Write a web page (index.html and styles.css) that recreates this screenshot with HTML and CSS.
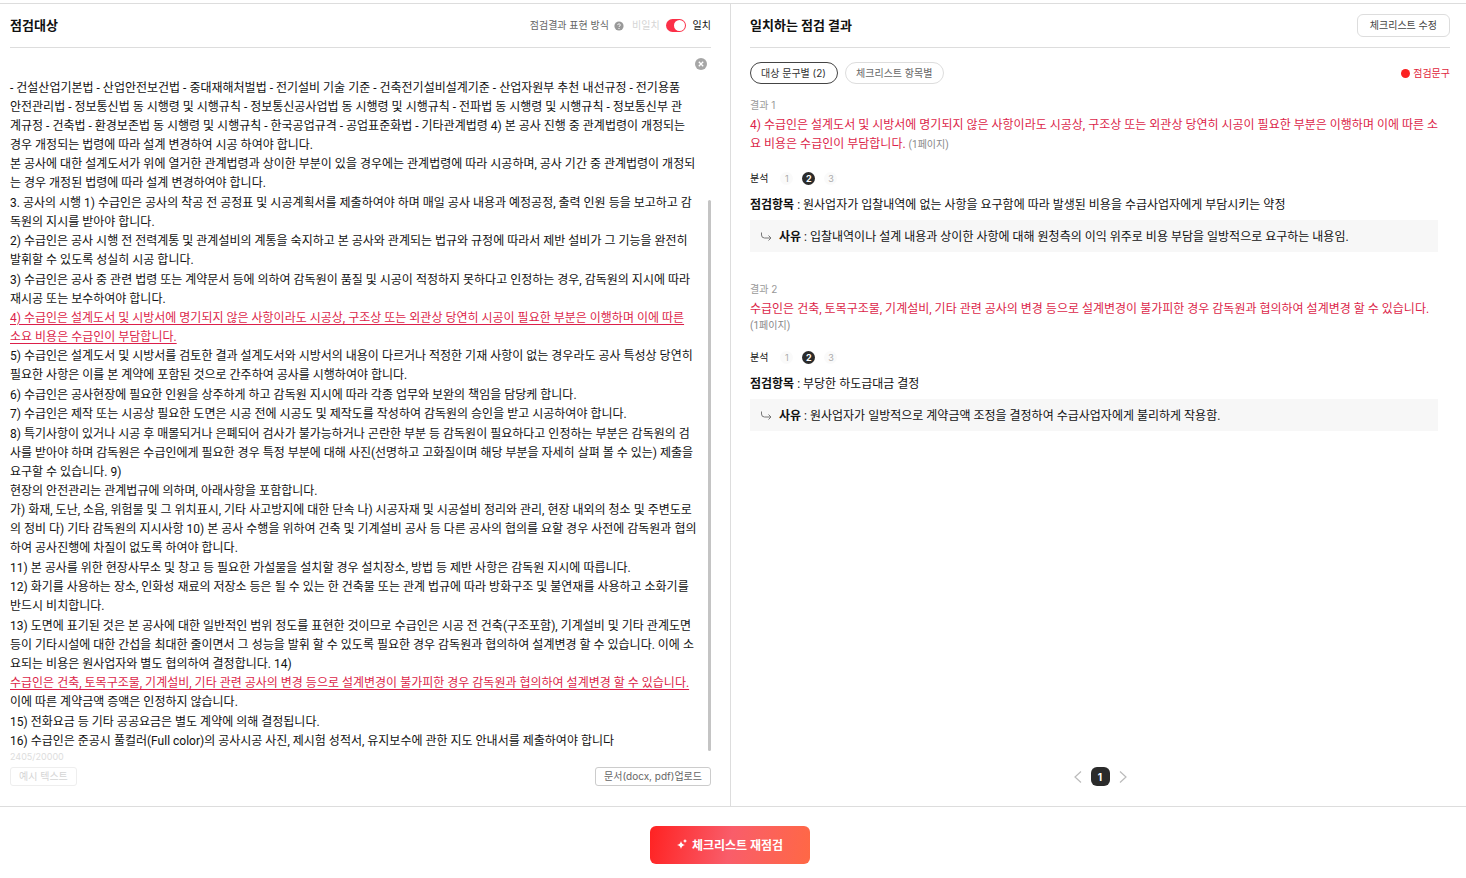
FILE: index.html
```html
<!DOCTYPE html>
<html lang="ko">

<head>
  <meta charset="UTF-8">
  <meta name="viewport" content="width=device-width, initial-scale=1.0">
  <title>체크리스트 점검</title>
  <link rel="stylesheet" href="styles.css">
</head>

<body>
  <main class="panels">
    <section class="panel target">
      <header class="panel-header">
        <h1>점검대상</h1>
        <div class="view-mode">
          <span class="view-label">점검결과 표현 방식</span>
          <button class="icon-btn" type="button" aria-label="도움말">
            <svg width="10" height="10" viewBox="0 0 10 10">
              <circle cx="5" cy="5" r="4.6" fill="#999" />
              <path d="M3.7 4.1c0-1.7 2.7-1.6 2.6 0 0 .9-1.3.9-1.3 1.8M5 7v1" fill="none" stroke="#fff" />
            </svg>
          </button>
          <span class="mode-off">비일치</span>
          <input class="toggle" type="checkbox" id="match-toggle" checked>
          <label for="match-toggle">일치</label>
        </div>
      </header>

      <div class="clear-row">
        <button class="icon-btn" type="button" aria-label="지우기">
          <svg width="12" height="12" viewBox="0 0 12 12">
            <circle cx="6" cy="6" r="6" fill="#a6a6a6" />
            <path d="M3.8 3.8l4.4 4.4M8.2 3.8L3.8 8.2" stroke="#fff" stroke-width="1.3" />
          </svg>
        </button>
      </div>

      <div class="document">
        <div class="document-text">
          <p>- 건설산업기본법 - 산업안전보건법 - 중대재해처벌법 - 전기설비 기술 기준 - 건축전기설비설계기준 - 산업자원부 추천 내선규정 - 전기용품<br>안전관리법 - 정보통신법 동 시행령 및 시행규칙 - 정보통신공사업법 동 시행령 및 시행규칙 - 전파법 동 시행령 및 시행규칙 - 정보통신부 관<br>계규정 - 건축법 - 환경보존법 동 시행령 및 시행규칙 - 한국공업규격 - 공업표준화법 - 기타관계법령 4) 본 공사 진행 중 관계법령이 개정되는<br>경우 개정되는 법령에 따라 설계 변경하여 시공 하여야 합니다.</p>
          <p>본 공사에 대한 설계도서가 위에 열거한 관계법령과 상이한 부분이 있을 경우에는 관계법령에 따라 시공하며, 공사 기간 중 관계법령이 개정되<br>는 경우 개정된 법령에 따라 설계 변경하여야 합니다.</p>
          <p>3. 공사의 시행 1) 수급인은 공사의 착공 전 공정표 및 시공계획서를 제출하여야 하며 매일 공사 내용과 예정공정, 출력 인원 등을 보고하고 감<br>독원의 지시를 받아야 합니다.</p>
          <p>2) 수급인은 공사 시행 전 전력계통 및 관계설비의 계통을 숙지하고 본 공사와 관계되는 법규와 규정에 따라서 제반 설비가 그 기능을 완전히<br>발휘할 수 있도록 성실히 시공 합니다.</p>
          <p>3) 수급인은 공사 중 관련 법령 또는 계약문서 등에 의하여 감독원이 품질 및 시공이 적정하지 못하다고 인정하는 경우, 감독원의 지시에 따라<br>재시공 또는 보수하여야 합니다.</p>
          <p><mark>4) 수급인은 설계도서 및 시방서에 명기되지 않은 사항이라도 시공상, 구조상 또는 외관상 당연히 시공이 필요한 부분은 이행하며 이에 따른<br>소요 비용은 수급인이 부담합니다.</mark></p>
          <p>5) 수급인은 설계도서 및 시방서를 검토한 결과 설계도서와 시방서의 내용이 다르거나 적정한 기재 사항이 없는 경우라도 공사 특성상 당연히<br>필요한 사항은 이를 본 계약에 포함된 것으로 간주하여 공사를 시행하여야 합니다.</p>
          <p>6) 수급인은 공사현장에 필요한 인원을 상주하게 하고 감독원 지시에 따라 각종 업무와 보완의 책임을 담당케 합니다.</p>
          <p>7) 수급인은 제작 또는 시공상 필요한 도면은 시공 전에 시공도 및 제작도를 작성하여 감독원의 승인을 받고 시공하여야 합니다.</p>
          <p>8) 특기사항이 있거나 시공 후 매몰되거나 은폐되어 검사가 불가능하거나 곤란한 부분 등 감독원이 필요하다고 인정하는 부분은 감독원의 검<br>사를 받아야 하며 감독원은 수급인에게 필요한 경우 특정 부분에 대해 사진(선명하고 고화질이며 해당 부분을 자세히 살펴 볼 수 있는) 제출을<br>요구할 수 있습니다. 9)</p>
          <p>현장의 안전관리는 관계법규에 의하며, 아래사항을 포함합니다.</p>
          <p>가) 화재, 도난, 소음, 위험물 및 그 위치표시, 기타 사고방지에 대한 단속 나) 시공자재 및 시공설비 정리와 관리, 현장 내외의 청소 및 주변도로<br>의 정비 다) 기타 감독원의 지시사항 10) 본 공사 수행을 위하여 건축 및 기계설비 공사 등 다른 공사의 협의를 요할 경우 사전에 감독원과 협의<br>하여 공사진행에 차질이 없도록 하여야 합니다.</p>
          <p>11) 본 공사를 위한 현장사무소 및 창고 등 필요한 가설물을 설치할 경우 설치장소, 방법 등 제반 사항은 감독원 지시에 따릅니다.</p>
          <p>12) 화기를 사용하는 장소, 인화성 재료의 저장소 등은 될 수 있는 한 건축물 또는 관계 법규에 따라 방화구조 및 불연재를 사용하고 소화기를<br>반드시 비치합니다.</p>
          <p>13) 도면에 표기된 것은 본 공사에 대한 일반적인 범위 정도를 표현한 것이므로 수급인은 시공 전 건축(구조포함), 기계설비 및 기타 관계도면<br>등이 기타시설에 대한 간섭을 최대한 줄이면서 그 성능을 발휘 할 수 있도록 필요한 경우 감독원과 협의하여 설계변경 할 수 있습니다. 이에 소<br>요되는 비용은 원사업자와 별도 협의하여 결정합니다. 14)</p>
          <p><mark>수급인은 건축, 토목구조물, 기계설비, 기타 관련 공사의 변경 등으로 설계변경이 불가피한 경우 감독원과 협의하여 설계변경 할 수 있습니다.</mark><br>이에 따른 계약금액 증액은 인정하지 않습니다.</p>
          <p>15) 전화요금 등 기타 공공요금은 별도 계약에 의해 결정됩니다.</p>
          <p>16) 수급인은 준공시 풀컬러(Full color)의 공사시공 사진, 제시험 성적서, 유지보수에 관한 지도 안내서를 제출하여야 합니다</p>
        </div>
        <div class="scroll-track">
          <div class="scroll-thumb"></div>
        </div>
      </div>

      <div class="char-count">2405/20000</div>
      <div class="target-actions">
        <button class="small-btn" type="button" disabled>예시 텍스트</button>
        <button class="small-btn" type="button">문서(docx, pdf)업로드</button>
      </div>
    </section>

    <section class="panel results">
      <header class="panel-header">
        <h2>일치하는 점검 결과</h2>
        <button class="edit-btn" type="button">체크리스트 수정</button>
      </header>

      <div class="filter-row">
        <div class="tabs">
          <button class="tab active" type="button">대상 문구별 (2)</button>
          <button class="tab" type="button">체크리스트 항목별</button>
        </div>
        <span class="legend">점검문구</span>
      </div>

      <div class="result-list">
        <article class="result">
          <h3>결과 1</h3>
          <p class="phrase">4) 수급인은 설계도서 및 시방서에 명기되지 않은 사항이라도 시공상, 구조상 또는 외관상 당연히 시공이 필요한 부분은 이행하며 이에 따른 소<br>요 비용은 수급인이 부담합니다. <span class="page-ref">(1페이지)</span></p>
          <div class="analysis">
            <span>분석</span>
            <button class="step" type="button">1</button>
            <button class="step active" type="button">2</button>
            <button class="step" type="button">3</button>
          </div>
          <p class="item"><strong>점검항목</strong> : 원사업자가 입찰내역에 없는 사항을 요구함에 따라 발생된 비용을 수급사업자에게 부담시키는 약정</p>
          <div class="reason">
            <svg width="12" height="12" viewBox="0 0 12 12" fill="none" stroke="#777">
              <path d="M1.5 1.5V4q0 3 3 3H11M8.5 4.500L11 7 8.500 9.500" />
            </svg>
            <p><strong>사유</strong> : 입찰내역이나 설계 내용과 상이한 사항에 대해 원청측의 이익 위주로 비용 부담을 일방적으로 요구하는 내용임.</p>
          </div>
        </article>

        <article class="result">
          <h3>결과 2</h3>
          <p class="phrase">수급인은 건축, 토목구조물, 기계설비, 기타 관련 공사의 변경 등으로 설계변경이 불가피한 경우 감독원과 협의하여 설계변경 할 수 있습니다. <span class="page-ref block">(1페이지)</span></p>
          <div class="analysis">
            <span>분석</span>
            <button class="step" type="button">1</button>
            <button class="step active" type="button">2</button>
            <button class="step" type="button">3</button>
          </div>
          <p class="item"><strong>점검항목</strong> : 부당한 하도급대금 결정</p>
          <div class="reason">
            <svg width="12" height="12" viewBox="0 0 12 12" fill="none" stroke="#777">
              <path d="M1.5 1.5V4q0 3 3 3H11M8.5 4.500L11 7 8.500 9.500" />
            </svg>
            <p><strong>사유</strong> : 원사업자가 일방적으로 계약금액 조정을 결정하여 수급사업자에게 불리하게 작용함.</p>
          </div>
        </article>
      </div>

      <nav class="pagination">
        <button class="icon-btn" type="button" aria-label="이전">
          <svg width="8" height="12" viewBox="0 0 8 12" fill="none" stroke="#bbb" stroke-width="1.2">
            <path d="M7 .5L1 6l6 5.5" />
          </svg>
        </button>
        <button class="page-btn" type="button">1</button>
        <button class="icon-btn" type="button" aria-label="다음">
          <svg width="8" height="12" viewBox="0 0 8 12" fill="none" stroke="#bbb" stroke-width="1.2">
            <path d="M1 .5L7 6l-6 5.5" />
          </svg>
        </button>
      </nav>
    </section>
  </main>

  <footer class="footer">
    <button class="recheck-btn" type="button">
      <svg width="10" height="10" viewBox="0 0 10 10" fill="#fff">
        <path d="M4 2Q4.600 5.400 8 6 4.600 6.600 4 10 3.400 6.600 0 6 3.400 5.400 4 2z" />
        <path d="M8 0q.3 1.700 2 2Q8.300 2.300 8 4 7.700 2.300 6 2 7.700 1.700 8 0z" />
      </svg>
      체크리스트 재점검
    </button>
  </footer>
</body>

</html>
```
FILE: styles.css
```css
* {
  box-sizing: border-box;
}

body {
  margin: 0;
  padding-top: 3px;
  min-height: 100vh;
  display: flex;
  flex-direction: column;
  background: #fff;
  color: #111;
  font-family: Inter, "Noto Sans CJK KR", sans-serif;
  font-size: 12px;
  line-height: 19px;
}

h1,
h2,
h3,
p {
  margin: 0;
}

button {
  font-family: inherit;
  cursor: pointer;
}

svg {
  display: block;
}

.panels {
  flex: 1;
  display: grid;
  grid-template-columns: 731fr 735fr;
  border-top: 1px solid #ddd;
  border-bottom: 1px solid #ddd;
}

.panel {
  display: flex;
  flex-direction: column;
  min-width: 0;
  padding-bottom: 20px;
}

.target {
  padding-left: 10px;
  padding-right: 19px;
  border-right: 1px solid #ddd;
}

.results {
  padding-left: 19px;
  padding-right: 16px;
}

.panel-header {
  display: flex;
  align-items: center;
  justify-content: space-between;
  height: 44px;
  border-bottom: 1px solid #ddd;
}

.panel-header h1,
.panel-header h2 {
  font-size: 13px;
  font-weight: 700;
}

.view-mode {
  display: flex;
  align-items: center;
  font-size: 10px;
}

.view-label {
  color: #666;
  margin-right: 5px;
}

.mode-off {
  color: #d5d5d5;
  margin-left: 8px;
}

.toggle {
  appearance: none;
  width: 20px;
  height: 13px;
  margin: 0 7px 0 6px;
  padding: 1px;
  border-radius: 7px;
  background: #ccc;
  display: flex;
  cursor: pointer;
}

.toggle::before {
  content: "";
  width: 11px;
  height: 11px;
  border-radius: 50%;
  background: #fff;
}

.toggle:checked {
  background: #fb3048;
  justify-content: flex-end;
}

.icon-btn {
  padding: 0;
  border: none;
  background: none;
}

.clear-row {
  display: flex;
  justify-content: flex-end;
  padding: 10px 4px 9px;
}

/* document text */
.document {
  flex: 1;
  display: flex;
  justify-content: space-between;
}

.document-text,
.phrase,
.item,
.reason {
  font-family: Roboto, "Noto Sans CJK KR", sans-serif;
}

.document-text {
  display: flex;
  flex-direction: column;
  justify-content: space-between;
  white-space: nowrap;
}

mark {
  background: none;
  color: #dc1f4a;
  text-decoration: underline;
  text-underline-offset: 2px;
}

.scroll-track {
  display: flex;
  align-items: flex-end;
  width: 3px;
}

.scroll-thumb {
  width: 3px;
  height: 82%;
  border-radius: 2px;
  background: #c4c4c4;
}

.char-count {
  font-size: 9px;
  line-height: 11px;
  color: #ddd;
}

.target-actions {
  display: flex;
  justify-content: space-between;
  margin-top: 5px;
}

.small-btn {
  height: 19px;
  padding: 0 8px 1px;
  border: 1px solid #ccc;
  border-radius: 3px;
  background: #fff;
  color: #666;
  font-size: 10px;
  line-height: 16px;
}

.small-btn:disabled {
  border-color: #eee;
  color: #d5d5d5;
  cursor: default;
}

/* results */
.edit-btn {
  height: 23px;
  padding: 0 12px 2px;
  border: 1px solid #ddd;
  border-radius: 6px;
  background: #fff;
  color: #444;
  font-size: 10px;
}

.filter-row {
  display: flex;
  align-items: center;
  justify-content: space-between;
  margin-top: 14px;
}

.tabs {
  display: flex;
  gap: 7px;
}

.tab {
  height: 22px;
  padding: 0 11px 2px 10px;
  border: 1px solid #ddd;
  border-radius: 11px;
  background: #fff;
  color: #666;
  font-size: 10px;
}

.tab.active {
  border-color: #444;
  color: #333;
}

.legend {
  display: flex;
  align-items: center;
  gap: 3px;
  color: #e0263c;
  font-size: 10px;
}

.legend::before {
  content: "";
  width: 9px;
  height: 9px;
  border-radius: 50%;
  background: #fb2222;
}

.result-list {
  flex: 1;
  display: flex;
  flex-direction: column;
  gap: 26px;
  padding: 10px 0;
}

.result {
  margin-right: 12px;
}

.result h3 {
  color: #999;
  font-size: 10px;
  font-weight: 400;
  line-height: 22px;
}

.phrase {
  color: #dc1f4a;
  white-space: nowrap;
}

.page-ref {
  color: #888;
  font-size: 10px;
}

.page-ref.block {
  display: block;
  line-height: 14px;
}

.analysis {
  display: flex;
  align-items: center;
  gap: 9px;
  margin-top: 17px;
  font-size: 10px;
  line-height: 14px;
}

.analysis span {
  margin-right: 3px;
}

.step {
  width: 13px;
  height: 13px;
  padding: 0;
  border: none;
  border-radius: 50%;
  background: #fafafa;
  color: #aaa;
  font-size: 9px;
  line-height: 13px;
}

.step.active {
  background: #2b2b2b;
  color: #fff;
  font-weight: 700;
}

.item {
  margin-top: 11px;
}

.reason {
  display: flex;
  align-items: center;
  gap: 7px;
  height: 32px;
  margin-top: 5px;
  padding: 2px 10px 0;
  background: #f7f7f7;
}

.pagination {
  display: flex;
  align-items: center;
  justify-content: center;
  gap: 9px;
}

.page-btn {
  width: 19px;
  height: 19px;
  padding: 0;
  border: none;
  border-radius: 6px;
  background: #2b2b2b;
  color: #fff;
  font-size: 10px;
  font-weight: 700;
}

.footer {
  display: flex;
  justify-content: center;
  padding: 19px 6px 14px 0;
}

.recheck-btn {
  display: flex;
  align-items: center;
  justify-content: center;
  gap: 5px;
  width: 160px;
  height: 38px;
  padding: 0 0 2px;
  border: none;
  border-radius: 6px;
  background: linear-gradient(100deg, #ff2222, #f95d6a 50%, #ff6845);
  color: #fff;
  font-size: 12px;
  font-weight: 700;
}
```
